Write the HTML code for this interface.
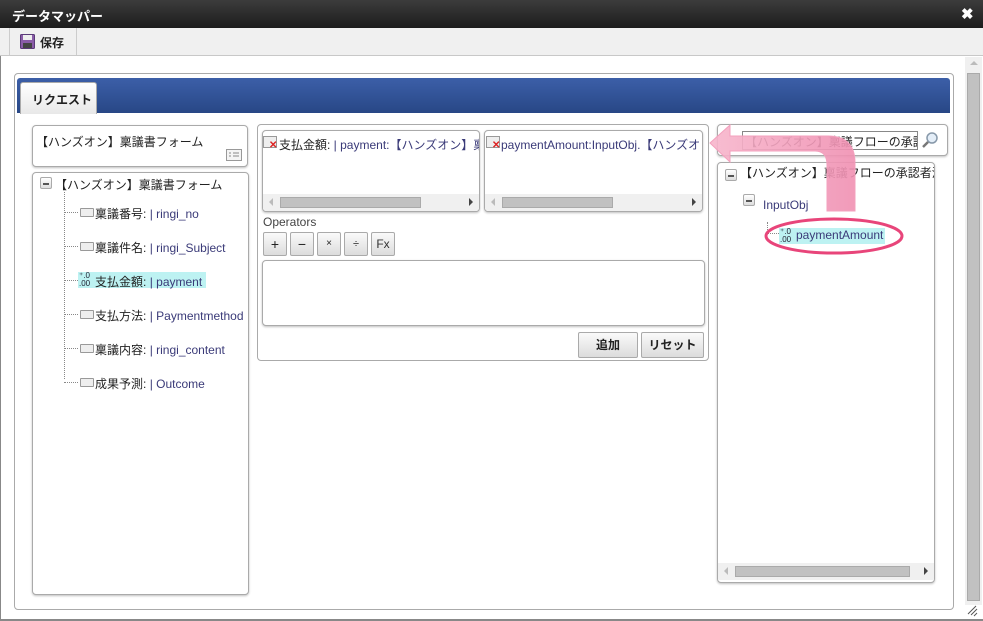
<!DOCTYPE html>
<html><head><meta charset="utf-8"><style>
*{box-sizing:border-box;margin:0;padding:0}
body{width:983px;height:621px;overflow:hidden;background:#fff;font-family:"Liberation Sans","Noto Sans CJK JP",sans-serif;font-size:12px;color:#222;position:relative}
.a{position:absolute}
.box{position:absolute;border:1px solid #aaa;border-radius:4px;background:#fff;box-shadow:0 1px 2px rgba(0,0,0,.25)}
.hs{position:absolute;left:0;right:0;bottom:0;height:17px;background:#f0f0f0}
.hs .t{position:absolute;top:3px;height:11px;background:#c1c1c1;border:1px solid #aaa}
.hs .l,.hs .r{position:absolute;top:4px;width:0;height:0;border-top:4px solid transparent;border-bottom:4px solid transparent}
.hs .l{left:6px;border-right:4px solid #bbb}
.hs .r{right:6px;border-left:4px solid #444}
.btn{position:absolute;border:1px solid #aaa;border-radius:2px;background:linear-gradient(#fafafa,#dcdcdc);text-align:center;font-size:12px;color:#222}
.it{position:absolute;left:95px;font-size:12px;white-space:nowrap}
.it b{font-weight:normal;color:#222}
.it span{color:#3a3a78}
.ic{position:absolute;left:80px;width:14px;height:9px;border:1px solid #999;background:#eee;border-radius:1px}
.dh{position:absolute;left:64px;width:14px;border-top:1px dotted #888}
.mn{position:absolute;width:12px;height:12px;border:1px solid #aaa;background:linear-gradient(#fff,#ddd);border-radius:2px}
.mn:after{content:"";position:absolute;left:2px;top:5px;width:6px;height:2px;background:#555}
</style></head><body>
<div class="a" style="left:0;top:0;width:983px;height:28px;background:linear-gradient(#3c3c3c,#1c1c1c)"></div>
<div class="a" style="left:12px;top:6px;color:#fff;font-weight:bold;font-size:13px">データマッパー</div>
<div class="a" style="left:961px;top:5px;color:#fff;font-weight:bold;font-size:15px">✖</div>
<div class="a" style="left:0;top:28px;width:983px;height:28px;background:#f0f0f0;border-bottom:1px solid #c8c8c8"></div>
<div class="a" style="left:9px;top:28px;width:68px;height:27px;border-left:1px solid #ccc;border-right:1px solid #ccc"></div>
<svg class="a" style="left:20px;top:34px" width="15" height="15"><rect x="0.5" y="0.5" width="14" height="14" rx="1" fill="#8a5ca8" stroke="#5a3a78"/><rect x="3" y="1" width="9" height="5" fill="#eee"/><rect x="3" y="9" width="9" height="5" fill="#444"/></svg>
<div class="a" style="left:40px;top:34px;font-weight:bold;font-size:12px">保存</div>
<div class="a" style="left:0;top:56px;width:1px;height:565px;background:#888"></div>
<div class="a" style="left:965px;top:57px;width:17px;height:548px;background:#f0f0f0"></div>
<div class="a" style="left:967px;top:73px;width:13px;height:528px;background:#c1c1c1;border:1px solid #aaa"></div>
<div class="a" style="left:970px;top:61px;width:0;height:0;border-left:4px solid transparent;border-right:4px solid transparent;border-bottom:4px solid #bbb"></div>
<div class="a" style="left:0;top:619px;width:983px;height:2px;background:#888"></div>
<div class="a" style="left:14px;top:73px;width:940px;height:537px;border:1px solid #aaa;border-radius:4px"></div>
<div class="a" style="left:17px;top:78px;width:933px;height:35px;background:linear-gradient(#3c5fa8,#284786);border-radius:3px 3px 0 0"></div>
<div class="a" style="left:20px;top:82px;width:77px;height:32px;background:linear-gradient(#fff,#e8e8e8);border:1px solid #aaa;border-bottom:none;border-radius:3px 3px 0 0;font-weight:bold;font-size:12px;padding:8px 0 0 11px">リクエスト</div>

<div class="box" style="left:32px;top:125px;width:216px;height:42px"></div>
<div class="a" style="left:36px;top:133px">【ハンズオン】稟議書フォーム</div>
<svg class="a" style="left:226px;top:149px" width="16" height="12"><rect x=".5" y=".5" width="15" height="11" fill="#f4f4f4" stroke="#999"/><path d="M3 4h2M3 7h2M7 4h6M7 7h6" stroke="#888"/></svg>
<div class="box" style="left:32px;top:172px;width:217px;height:423px"></div>
<div class="mn" style="left:40px;top:177px"></div>
<div class="a" style="left:55px;top:176px">【ハンズオン】稟議書フォーム</div>
<div class="a" style="left:64px;top:192px;height:187px;border-left:1px dotted #888"></div>
<div class="dh" style="top:212px"></div><div class="ic" style="top:208px"></div><div class="it" style="top:205px"><b>稟議番号:</b> <span>| ringi_no</span></div>
<div class="dh" style="top:246px"></div><div class="ic" style="top:242px"></div><div class="it" style="top:239px"><b>稟議件名:</b> <span>| ringi_Subject</span></div>
<div class="dh" style="top:280px"></div><div class="a" style="left:78px;top:272px;width:128px;height:16px;background:#bdf2f2"></div><div class="a" style="left:79px;top:272px;font-size:8px;line-height:8px;color:#223">⁺.0<br>.00</div><div class="it" style="top:273px"><b>支払金額:</b> <span>| payment</span></div>
<div class="dh" style="top:314px"></div><div class="ic" style="top:310px"></div><div class="it" style="top:307px"><b>支払方法:</b> <span>| Paymentmethod</span></div>
<div class="dh" style="top:348px"></div><div class="ic" style="top:344px"></div><div class="it" style="top:341px"><b>稟議内容:</b> <span>| ringi_content</span></div>
<div class="dh" style="top:382px"></div><div class="ic" style="top:378px"></div><div class="it" style="top:375px"><b>成果予測:</b> <span>| Outcome</span></div>

<div class="a" style="left:257px;top:124px;width:452px;height:237px;border:1px solid #aaa;border-radius:4px"></div>
<div class="box" style="left:262px;top:130px;width:218px;height:82px;overflow:hidden"><div class="hs"><div class="l"></div><div class="t" style="left:17px;width:141px"></div><div class="r"></div></div></div>
<div class="a" style="left:263px;top:136px;width:14px;height:12px;border:1px solid #999;background:#eee"></div><div class="a" style="left:269px;top:140px;color:#d22;font-size:10px;font-weight:bold">✕</div>
<div class="a" style="left:279px;top:136px;white-space:nowrap;width:200px;overflow:hidden">支払金額: <span style="color:#3a3a78">| payment:【ハンズオン】稟議</span></div>
<div class="box" style="left:484px;top:130px;width:219px;height:82px;overflow:hidden"><div class="hs"><div class="l"></div><div class="t" style="left:17px;width:111px"></div><div class="r"></div></div></div>
<div class="a" style="left:486px;top:136px;width:14px;height:12px;border:1px solid #999;background:#eee"></div><div class="a" style="left:492px;top:140px;color:#d22;font-size:10px;font-weight:bold">✕</div>
<div class="a" style="left:501px;top:136px;white-space:nowrap;width:200px;overflow:hidden;color:#3a3a78">paymentAmount:InputObj.【ハンズオン</div>
<div class="a" style="left:263px;top:215px;color:#444">Operators</div>
<div class="btn" style="left:263px;top:232px;width:24px;height:24px;line-height:22px;font-size:14px">+</div>
<div class="btn" style="left:290px;top:232px;width:24px;height:24px;line-height:22px;font-size:14px">−</div>
<div class="btn" style="left:317px;top:232px;width:24px;height:24px;line-height:22px;font-size:10px">×</div>
<div class="btn" style="left:344px;top:232px;width:24px;height:24px;line-height:22px;font-size:11px">÷</div>
<div class="btn" style="left:371px;top:232px;width:24px;height:24px;line-height:22px;color:#333">Fx</div>
<div class="box" style="left:262px;top:260px;width:443px;height:66px"></div>
<div class="btn" style="left:578px;top:332px;width:60px;height:26px;line-height:24px;font-weight:bold">追加</div>
<div class="btn" style="left:641px;top:332px;width:63px;height:26px;line-height:24px;font-weight:bold">リセット</div>

<div class="box" style="left:717px;top:124px;width:231px;height:32px"></div>
<div class="a" style="left:742px;top:131px;width:176px;height:19px;border:1px solid #888;background:#fff;padding:1px 2px;white-space:nowrap;overflow:hidden">【ハンズオン】稟議フローの承認者</div>
<svg class="a" style="left:921px;top:131px" width="18" height="18"><circle cx="11" cy="7" r="5" fill="#e4eef8" stroke="#8899aa" stroke-width="1.5"/><path d="M7 11L2 16" stroke="#777" stroke-width="2.5"/></svg>
<div class="box" style="left:717px;top:162px;width:218px;height:421px;overflow:hidden"><div class="hs" style="bottom:2px"><div class="l"></div><div class="t" style="left:17px;width:175px"></div><div class="r"></div></div></div>
<div class="mn" style="left:725px;top:169px"></div>
<div class="a" style="left:740px;top:164px;white-space:nowrap;width:194px;overflow:hidden">【ハンズオン】稟議フローの承認者決定</div>
<div class="mn" style="left:743px;top:194px"></div>
<div class="a" style="left:763px;top:198px;color:#3a3a78">InputObj</div>
<div class="a" style="left:767px;top:222px;width:12px;height:12px;border-left:1px dotted #888;border-bottom:1px dotted #888"></div>
<div class="a" style="left:779px;top:228px;width:106px;height:16px;background:#bdf2f2"></div>
<div class="a" style="left:780px;top:228px;font-size:8px;line-height:8px;color:#223">⁺.0<br>.00</div>
<div class="a" style="left:796px;top:228px;color:#3a3a78">paymentAmount</div>
<svg class="a" style="left:0;top:0" width="983" height="621">
<defs><linearGradient id="g" x1="0" y1="0" x2="1" y2="0"><stop offset="0" stop-color="#f7b6cc"/><stop offset="1" stop-color="#f090b2"/></linearGradient></defs>
<path d="M710 143 L730 125 L730 136 L828 136 Q855 136 855 163 L855 211 L827 211 L827 165 Q827 151 815 151 L730 151 L730 162 Z" fill="url(#g)" fill-opacity=".9" stroke="#f3a0bd"/>
<ellipse cx="834" cy="236" rx="68" ry="17" fill="none" stroke="#e8457a" stroke-width="3"/>
<path d="M968 614l8-8M971 615l6-6M974 616l3-3" stroke="#555"/>
</svg>
</body></html>
